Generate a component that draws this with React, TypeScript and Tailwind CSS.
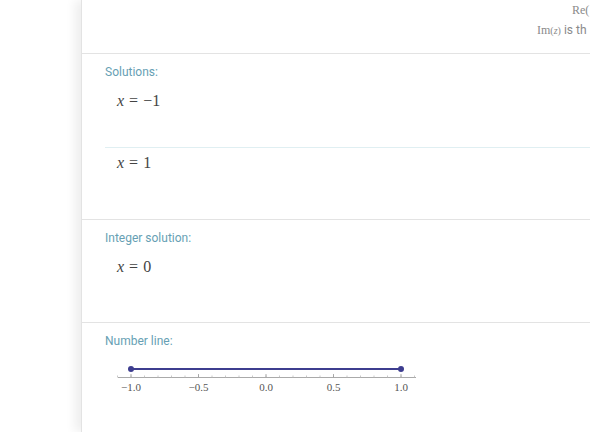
import React from 'react'

const labelCls = 'text-[12px] leading-4 text-[#679fb4] font-["Roboto",sans-serif]'
const mathCls = 'text-[16px] leading-5 text-[#444] font-["Liberation_Serif",serif]'

function Eq({ value }: { value: string }) {
  return (
    <p className={mathCls}>
      <i>x</i>
      <span className="mx-[5px]">=</span>
      {value}
    </p>
  )
}

function NumberLine() {
  const x0 = 26
  const unit = 135
  const pos = (v: number) => x0 + (v + 1) * unit
  const minor = Array.from({ length: 23 }, (_, i) => -1.1 + i * 0.1)
  const major = [-1, -0.5, 0, 0.5, 1]
  return (
    <svg width="320" height="46" className="block">
      <line x1="13" y1="26.5" x2="311" y2="26.5" stroke="#aaa" strokeWidth="1" />
      {minor.map((v, i) => (
        <line key={i} x1={pos(v)} y1="24.5" x2={pos(v)} y2="26.5" stroke="#bbb" strokeWidth="0.8" />
      ))}
      {major.map((v) => (
        <line key={v} x1={pos(v)} y1="23" x2={pos(v)} y2="26.5" stroke="#999" strokeWidth="0.8" />
      ))}
      <line x1={pos(-1)} y1="18" x2={pos(1)} y2="18" stroke="#3d3d8f" strokeWidth="2" />
      <circle cx={pos(-1)} cy="18" r="3" fill="#3d3d8f" />
      <circle cx={pos(1)} cy="18" r="3" fill="#3d3d8f" />
      {major.map((v) => (
        <text
          key={v}
          x={pos(v)}
          y="39.5"
          textAnchor="middle"
          fontSize="11"
          fill="#555"
          fontFamily="'Liberation Serif', serif"
        >
          {v < 0 ? '−' : ''}
          {Math.abs(v).toFixed(1)}
        </text>
      ))}
    </svg>
  )
}

export default function App() {
  return (
    <div className="flex h-[432px] w-[590px] overflow-hidden bg-white">
      <div className="w-[81px] shrink-0" />
      <div className="relative w-[509px] shrink-0 overflow-hidden border-l border-[#e3e3e3] bg-white shadow-[-6px_0_10px_rgba(0,0,0,0.07)]">
        <div className="h-[54px] border-b border-[#e3e3e3] pt-[3px] font-['Liberation_Serif',serif] text-[12px] leading-[14px] text-[#8a8a8a]">
          <p className="ml-[490px]">Re(</p>
          <p className="mt-[6px] ml-[455px] whitespace-nowrap">
            Im<span className="text-[10px]">(<i>z</i>)</span>{' '}
            <span className="font-['Roboto',sans-serif]">is th</span>
          </p>
        </div>

        <div className="h-[166px] border-b border-[#e3e3e3] pl-[23px] pt-[10px]">
          <p className={labelCls}>Solutions:</p>
          <div className="h-[68px] border-b border-[#e0eff2] pl-[12px] pt-[11px]">
            <Eq value="−1" />
          </div>
          <div className="pl-[12px] pt-[5px]">
            <Eq value="1" />
          </div>
        </div>

        <div className="h-[103px] border-b border-[#e3e3e3] pl-[23px] pt-[10px]">
          <p className={labelCls}>Integer solution:</p>
          <div className="pl-[12px] pt-[11px]">
            <Eq value="0" />
          </div>
        </div>

        <div className="pl-[23px] pt-[10px]">
          <p className={labelCls}>Number line:</p>
          <div className="mt-[2px]">
            <NumberLine />
          </div>
        </div>
      </div>
    </div>
  )
}
